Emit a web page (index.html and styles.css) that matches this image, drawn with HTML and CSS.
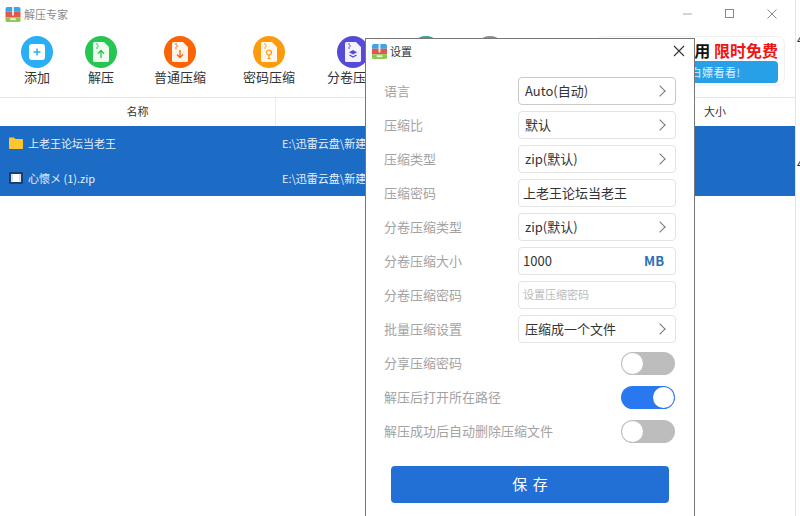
FILE: index.html
```html
<!DOCTYPE html>
<html lang="zh-CN">
<head>
    <meta charset="UTF-8">
    <title>解压专家</title>
    <link rel="stylesheet" href="styles.css">
</head>
<body>
    <svg class="defs" width="0" height="0">
        <symbol id="logo" viewBox="0 0 16 16">
            <path d="M0 5V2a2 2 0 0 1 2-2h12a2 2 0 0 1 2 2v3z" fill="#3aa6e8"/>
            <rect y="5" width="16" height="6" fill="#e2574c"/>
            <path d="M0 11h16v3a2 2 0 0 1-2 2H2a2 2 0 0 1-2-2z" fill="#8cc84b"/>
            <rect x="7" y="0" width="2" height="9" fill="#e8eef2"/>
            <rect x="5" y="12" width="6" height="2" fill="#e8f4d8"/>
        </symbol>
        <symbol id="doc" viewBox="0 0 16 20">
            <path d="M1.5 0H11l5 5v13.5a1.5 1.5 0 0 1-1.5 1.5h-13A1.5 1.5 0 0 1 0 18.500V1.500A1.500 1.500 0 0 1 1.500 0z" fill="#fff" fill-opacity=".92"/>
            <path d="M3 2h2M4 4h2M3 6h2" stroke="currentColor" stroke-width="1.2" fill="none"/>
        </symbol>
    </svg>

    <div class="page">
        <div class="app">
            <div class="titlebar">
                <svg class="app-logo"><use href="#logo"/></svg>
                <span class="app-name">解压专家</span>
                <div class="win-buttons">
                    <svg width="12" height="12" viewBox="0 0 12 12"><path d="M1 6h9" stroke="#aaa" stroke-width="1"/></svg>
                    <svg width="12" height="12" viewBox="0 0 12 12"><rect x="1.500" y="1.500" width="8" height="8" fill="none" stroke="#888"/></svg>
                    <svg width="12" height="12" viewBox="0 0 12 12"><path d="M1.500 1.500l9 9M10.500 1.500l-9 9" stroke="#888" fill="none"/></svg>
                </div>
            </div>

            <div class="toolbar">
                <div class="tools">
                    <div class="tool">
                        <span class="tool-icon add">
                            <svg width="16" height="16" viewBox="0 0 16 16"><rect width="16" height="16" rx="3" fill="#fff"/><path d="M8 4.500v7M4.500 8h7" stroke="#2aaef5" stroke-width="1.500"/></svg>
                        </span>
                        <span>添加</span>
                    </div>
                    <div class="tool">
                        <span class="tool-icon extract">
                            <svg width="16" height="20" viewBox="0 0 16 20"><use href="#doc"/><path d="M8 16V9M5 11.500L8 8.500l3 3" stroke="currentColor" stroke-width="1.300" fill="none"/></svg>
                        </span>
                        <span>解压</span>
                    </div>
                    <div class="tool">
                        <span class="tool-icon normal">
                            <svg width="16" height="20" viewBox="0 0 16 20"><use href="#doc"/><path d="M8 8v7M5 12.500l3 3 3-3" stroke="currentColor" stroke-width="1.300" fill="none"/></svg>
                        </span>
                        <span>普通压缩</span>
                    </div>
                    <div class="tool">
                        <span class="tool-icon password">
                            <svg width="16" height="20" viewBox="0 0 16 20"><use href="#doc"/><circle cx="8" cy="10.500" r="2.500" fill="none" stroke="currentColor" stroke-width="1.200"/><path d="M8 13v3M6.500 16.500h3" stroke="currentColor" stroke-width="1.200" fill="none"/></svg>
                        </span>
                        <span>密码压缩</span>
                    </div>
                    <div class="tool">
                        <span class="tool-icon volume">
                            <svg width="16" height="20" viewBox="0 0 16 20"><use href="#doc"/><path d="M8 8l4 2.300-4 2.300-4-2.300z" fill="currentColor"/><path d="M4.500 13L8 15l3.500-2" stroke="currentColor" stroke-width="1.300" fill="none"/></svg>
                        </span>
                        <span>分卷压缩</span>
                    </div>
                    <div class="tool">
                        <span class="tool-icon teal"></span>
                    </div>
                    <div class="tool">
                        <span class="tool-icon grey"></span>
                    </div>
                </div>

                <div class="promo">
                    <div class="promo-title">应用 <em>限时免费</em></div>
                    <div class="promo-button">白嫖看看!</div>
                </div>
            </div>

            <div class="table-head">
                <div class="col-name">名称</div>
                <div class="col-path"></div>
                <div class="col-size">大小</div>
            </div>
            <div class="file-row">
                <div class="file-name">
                    <svg width="14" height="12" viewBox="0 0 14 12"><path d="M0 1.500A1 1 0 0 1 1 .5h4l1.500 1.500H13a1 1 0 0 1 1 1V11a1 1 0 0 1-1 1H1a1 1 0 0 1-1-1z" fill="#fdc62e"/></svg>
                    上老王论坛当老王
                </div>
                <div class="file-path">E:\迅雷云盘\新建文件夹</div>
            </div>
            <div class="file-row">
                <div class="file-name">
                    <svg width="14" height="12" viewBox="0 0 14 12"><rect width="14" height="12" fill="#1d3f6e"/><rect x="2" y="2" width="10" height="8" fill="#cfe2f6"/><rect x="4" y="2" width="6" height="8" fill="#fff"/></svg>
                    心懷メ (1).zip
                </div>
                <div class="file-path">E:\迅雷云盘\新建文件夹</div>
            </div>
        </div>

        <div class="edge">
            <span>4</span>
            <span>4</span>
        </div>
    </div>

    <div class="dialog">
        <div class="dialog-title">
            <svg class="dialog-logo"><use href="#logo"/></svg>
            <span>设置</span>
            <svg class="dialog-close" width="12" height="12" viewBox="0 0 12 12"><path d="M1 1l10 10M11 1L1 11" stroke="#333" stroke-width="1.100" fill="none"/></svg>
        </div>

        <div class="settings">
            <div class="setting">
                <label>语言</label>
                <div class="control select strong">Auto(自动)</div>
            </div>
            <div class="setting">
                <label>压缩比</label>
                <div class="control select">默认</div>
            </div>
            <div class="setting">
                <label>压缩类型</label>
                <div class="control select">zip(默认)</div>
            </div>
            <div class="setting">
                <label>压缩密码</label>
                <div class="control input">上老王论坛当老王</div>
            </div>
            <div class="setting">
                <label>分卷压缩类型</label>
                <div class="control select">zip(默认)</div>
            </div>
            <div class="setting">
                <label>分卷压缩大小</label>
                <div class="control input">1000<b class="unit">MB</b></div>
            </div>
            <div class="setting">
                <label>分卷压缩密码</label>
                <div class="control input placeholder">设置压缩密码</div>
            </div>
            <div class="setting">
                <label>批量压缩设置</label>
                <div class="control select">压缩成一个文件</div>
            </div>
            <div class="setting">
                <label>分享压缩密码</label>
                <div class="switch"></div>
            </div>
            <div class="setting">
                <label>解压后打开所在路径</label>
                <div class="switch on"></div>
            </div>
            <div class="setting">
                <label>解压成功后自动删除压缩文件</label>
                <div class="switch"></div>
            </div>
        </div>

        <button type="button" class="save-button">保 存</button>
    </div>
</body>
</html>
```

FILE: styles.css
```css
* {
    box-sizing: border-box;
}
html, body {
    margin: 0;
    height: 516px;
    overflow: hidden;
}
body {
    position: relative;
    font-family: "Noto Sans CJK SC", "Noto Sans", sans-serif;
    color: #333;
    background-color: #fff;
}
.defs {
    position: absolute;
}
.page {
    display: flex;
    height: 516px;
}
.app {
    width: 796px;
    flex: none;
    border-right: 1px solid #e4e4e4;
}
.edge {
    display: flex;
    flex-direction: column;
    gap: 106px;
    padding: 31px 0 0 1px;
    font-size: 13px;
    line-height: 18px;
    overflow: hidden;
}

/* title bar */
.titlebar {
    display: flex;
    align-items: center;
    height: 28px;
    padding-left: 5px;
}
.app-logo {
    width: 16px;
    height: 15px;
}
.app-name {
    margin-left: 3px;
    font-size: 11px;
    color: #8a8a8a;
}
.win-buttons {
    display: flex;
    gap: 30px;
    margin-left: auto;
    margin-right: 17px;
}

/* toolbar */
.toolbar {
    display: flex;
    height: 70px;
    border-bottom: 1px solid #e6e6e6;
}
.tools {
    display: grid;
    grid-template-columns: 64px 64px 94px 84px 84px 62px 66px;
    margin-left: 5px;
    padding-top: 8px;
}
.tool {
    display: flex;
    flex-direction: column;
    align-items: center;
    gap: 0;
    font-size: 13px;
    line-height: 18px;
    color: #333;
}
.tool-icon {
    display: flex;
    align-items: center;
    justify-content: center;
    width: 32px;
    height: 32px;
    border-radius: 50%;
}
.add { background-color: #2aaef5; }
.extract { background-color: #27c552; color: #27c552; }
.normal { background-color: #fb6404; color: #fb6404; }
.password { background-color: #fd9b0d; color: #fd9b0d; }
.volume { background-color: #564bd6; color: #564bd6; }
.teal { background-color: #2aa79b; }
.grey { background-color: #8a8f8c; }

.promo {
    width: 190px;
    height: 50px;
    margin: 8px 10px 0 auto;
    padding: 3px 6px 0 0;
    border: 1px solid #f1f1f1;
    border-radius: 8px;
}
.promo-title {
    text-align: right;
    font-size: 16px;
    line-height: 21px;
    font-weight: 700;
    color: #111;
}
.promo-title em {
    font-style: normal;
    color: #f01414;
}
.promo-button {
    width: 130px;
    height: 22px;
    margin-left: auto;
    padding-left: 5px;
    text-align: center;
    border-radius: 4px;
    font-size: 11px;
    line-height: 22px;
    letter-spacing: 0.5px;
    color: #dff1fd;
    background-color: #27a0e8;
}

/* file list */
.table-head {
    display: flex;
    height: 28px;
    font-size: 11px;
    line-height: 26px;
    color: #333;
    text-align: center;
}
.col-name {
    width: 276px;
    height: 27px;
    border-right: 1px solid #ececec;
}
.col-path {
    width: 394px;
}
.col-size {
    width: 90px;
}
.file-row {
    display: flex;
    align-items: center;
    height: 35px;
    padding-bottom: 2px;
    font-size: 11px;
    color: #e6effa;
    background-color: #1c6bc4;
}
.file-name {
    display: flex;
    align-items: center;
    gap: 5px;
    width: 282px;
    padding-left: 9px;
}
.file-path {
    white-space: nowrap;
}

/* settings dialog */
.dialog {
    position: absolute;
    left: 365px;
    top: 38px;
    width: 330px;
    height: 490px;
    padding: 0 18px;
    background-color: #fff;
    border: 1px solid #777;
}
.dialog-title {
    display: flex;
    align-items: center;
    height: 24px;
    margin: 0 -12px;
    font-size: 11px;
    color: #333;
}
.dialog-logo {
    width: 15px;
    height: 15px;
    margin-right: 3px;
}
.dialog-close {
    margin-left: auto;
    margin-right: 3px;
}
.settings {
    display: flex;
    flex-direction: column;
    gap: 6px;
    padding-top: 14px;
}
.setting {
    display: flex;
    align-items: center;
    justify-content: space-between;
    height: 28px;
}
.setting label {
    padding-bottom: 2px;
    font-size: 13px;
    color: #a3a3a3;
}
.control {
    display: flex;
    align-items: center;
    width: 158px;
    height: 28px;
    padding: 0 6px 2px;
    font-size: 13px;
    color: #333;
    border: 1px solid #e3e3e3;
    border-radius: 4px;
}
.strong {
    border-color: #c9c9c9;
}
.select::after {
    content: "";
    width: 7px;
    height: 7px;
    margin-left: auto;
    margin-top: 2px;
    margin-right: 5px;
    border-top: 1px solid #777;
    border-right: 1px solid #777;
    transform: rotate(45deg);
}
.input {
    padding-left: 4px;
}
.placeholder {
    font-size: 11px;
    color: #bbb;
}
.unit {
    margin-left: auto;
    margin-right: 5px;
    font-size: 13px;
    color: #2a6fb8;
}
.switch {
    position: relative;
    width: 54px;
    height: 23px;
    margin-right: 1px;
    border-radius: 12px;
    background-color: #bdbdbd;
}
.switch::after {
    content: "";
    position: absolute;
    left: 1px;
    top: 1px;
    width: 21px;
    height: 21px;
    border-radius: 50%;
    background-color: #fff;
}
.switch.on {
    background-color: #2a78f0;
}
.switch.on::after {
    left: 32px;
}
.save-button {
    display: block;
    width: 278px;
    height: 37px;
    margin: 21px 7px 0;
    padding-bottom: 3px;
    font-family: inherit;
    font-size: 15px;
    word-spacing: 2px;
    color: #fff;
    background-color: #2270d6;
    border: none;
    border-radius: 4px;
    cursor: pointer;
}
```
